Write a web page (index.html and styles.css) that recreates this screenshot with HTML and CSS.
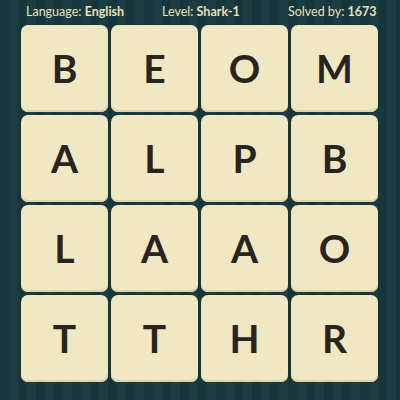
FILE: index.html
```html
<!DOCTYPE html>
<html>
<head>
<meta charset="utf-8">
<link rel="stylesheet" href="styles.css">
</head>
<body>
<div class="screen">
  <div class="header">
    <span class="info info-lang">Language: <b>English</b></span>
    <span class="info info-level">Level: <b>Shark-1</b></span>
    <span class="info info-solved">Solved by: <b>1673</b></span>
  </div>
  <div class="board">
    <div class="tile">B</div><div class="tile">E</div><div class="tile">O</div><div class="tile">M</div>
    <div class="tile">A</div><div class="tile">L</div><div class="tile">P</div><div class="tile">B</div>
    <div class="tile">L</div><div class="tile">A</div><div class="tile">A</div><div class="tile">O</div>
    <div class="tile">T</div><div class="tile">T</div><div class="tile">H</div><div class="tile">R</div>
  </div>
</div>
</body>
</html>
```
FILE: styles.css
```css
html, body {
  margin: 0;
  padding: 0;
}
.screen {
  width: 400px;
  height: 400px;
  overflow: hidden;
  background: repeating-linear-gradient(90deg, #17363b 0px, #17363b 9px, #1b3c42 9px, #1b3c42 18px);
  font-family: "Lato", "Open Sans", sans-serif;
}
.header {
  height: 25px;
  display: flex;
  align-items: center;
  padding-left: 26px;
  color: #e6e0be;
  font-size: 12.5px;
  box-sizing: border-box;
  padding-bottom: 2px;
}
.info b {
  font-weight: 700;
}
.info-lang { width: 136px; }
.info-level { width: 126px; }
.board {
  display: grid;
  grid-template-columns: repeat(4, 87px);
  grid-template-rows: repeat(4, 87px);
  gap: 3px;
  padding-left: 21px;
}
.tile {
  background: #f0e8c3;
  border-radius: 7px;
  box-shadow: inset 0 -2px 0 #ddd3a8;
  display: flex;
  align-items: center;
  justify-content: center;
  color: #2a241f;
  font-size: 39px;
  font-weight: 700;
  padding-bottom: 1px;
  box-sizing: border-box;
}
```
